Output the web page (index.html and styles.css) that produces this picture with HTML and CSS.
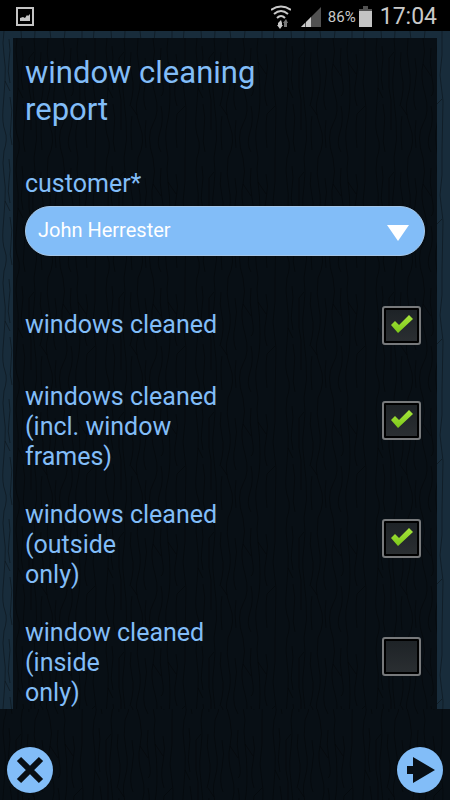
FILE: index.html
```html
<!DOCTYPE html>
<html lang="en">
<head>
  <meta charset="UTF-8">
  <meta name="viewport" content="width=device-width, initial-scale=1.0">
  <title>window cleaning report</title>
  <link rel="stylesheet" href="styles.css">
</head>
<body>

  <header class="status-bar">
    <svg class="icon-picture" width="18" height="19" viewBox="0 0 18 19">
      <path fill="#c4c4c4" fill-rule="evenodd" d="M0 0h18v19H0zM2 2v15h14V2z"/>
      <path fill="#c4c4c4" d="M4 14v-3l3-1 2 1 2-3 1 1 2-2v7z"/>
    </svg>
    <div class="status-right">
      <svg width="20" height="24" viewBox="0 0 20 24">
        <g fill="none" stroke="#c9c9c9" stroke-width="2">
          <path d="M0 5q10-7 20 0"/>
          <path d="M3 9q7-6 14 0"/>
          <path d="M6 13q4-4 8 0"/>
        </g>
        <path fill="#c9c9c9" d="M7 18l3-3 1 3v2h1l-3 4-3-4h1z"/>
        <path fill="#777" d="M13 22h3v-4h1l-2-4-3 4h1z"/>
      </svg>
      <svg class="icon-signal" width="20" height="20" viewBox="0 0 20 20">
        <path fill="#515151" d="M20 0v20H0z"/>
        <path fill="#c9c9c9" d="M0 20l4-4v4zM5 20v-5l5-5v10z"/>
      </svg>
      <span class="percent">86%</span>
      <svg class="icon-battery" width="13" height="21" viewBox="0 0 13 21">
        <path fill="#515151" d="M4 0h5v3h4v2H0V3h4z"/>
        <path fill="#c4c4c4" d="M0 5h13v16H0z"/>
      </svg>
      <span class="clock">17:04</span>
    </div>
  </header>

  <main class="content">
    <form class="panel" id="report">
      <h1>window cleaning<br>report</h1>

      <label class="field-label" for="customer">customer*</label>
      <div class="select-box">
        <select id="customer" name="customer">
          <option>John Herrester</option>
        </select>
        <svg class="select-arrow" width="22" height="16" viewBox="0 0 22 16">
          <path fill="#fff" d="M0 0h22L11 16z"/>
        </svg>
      </div>

      <div class="checks">
        <div class="check-row">
          <label for="cleaned">windows cleaned</label>
          <input type="checkbox" id="cleaned" checked>
        </div>
        <div class="check-row tall">
          <label for="frames">windows cleaned<br>(incl. window<br>frames)</label>
          <input type="checkbox" id="frames" checked>
        </div>
        <div class="check-row tall">
          <label for="outside">windows cleaned<br>(outside<br>only)</label>
          <input type="checkbox" id="outside" checked>
        </div>
        <div class="check-row tall">
          <label for="inside">window cleaned<br>(inside<br>only)</label>
          <input type="checkbox" id="inside">
        </div>
      </div>
    </form>
  </main>

  <footer class="actions">
    <button type="button" class="round" aria-label="Cancel">
      <svg width="46" height="46" viewBox="0 0 46 46">
        <path stroke="#080f15" stroke-width="6" d="M12 12l22 22M34 12L12 34"/>
      </svg>
    </button>
    <button type="submit" form="report" class="round" aria-label="Next">
      <svg width="46" height="46" viewBox="0 0 46 46">
        <path fill="#080f15" d="M10 19h6v-9l22 13-22 13v-9h-6z"/>
      </svg>
    </button>
  </footer>

</body>
</html>
```

FILE: styles.css
```css
* { box-sizing: border-box; margin: 0; padding: 0; }
:root {
  --blue: #82bdf8;
  --grain: url("data:image/svg+xml,%3Csvg xmlns='http://www.w3.org/2000/svg' width='90' height='120'%3E%3Cg fill='none' stroke='%23000' stroke-opacity='.35'%3E%3Cpath d='M4 0q-2 12 0 24t1 26-2 28 2 22-1 20M9 8q2 12 0 22t1 22M10 66q3 14 1 26t1 22M16 20v30l2 12v30M21 0q2 14 0 28t-1 24 3 30-2 38M28 14q-2 12 1 24t-2 30M29 78q-2 12 0 34M35 0q-2 16 1 30t-1 28 2 30-2 32M42 20q3 14 0 28t1 24M43 82q-2 12 0 28M50 0q3 14 0 26t2 30-2 30 0 34M58 10q-2 14 1 30t-1 18M58 68q3 14-1 26t1 20M65 0q-2 10 0 24t2 32-3 30 1 34M73 16q3 12 0 26t1 26M74 76q-2 14 0 34M82 0v24l-2 20 3 26-1 50M16 20l5-6M28 68l6 9M50 26l8 12M5 50l5 10M65 24l8 12M74 76l8-8'/%3E%3C/g%3E%3C/svg%3E");
}
body {
  font-family: Roboto, sans-serif;
  height: 100vh;
  display: flex;
  flex-direction: column;
  background: #080f15 var(--grain);
  color: var(--blue);
}
svg { display: block; }
.status-bar {
  height: 31px;
  flex: none;
  display: flex;
  justify-content: space-between;
  align-items: center;
  padding: 2px 13px 0 16px;
  background: #000;
  color: #c9c9c9;
}
.status-right {
  display: flex;
  align-items: center;
}
.icon-signal { margin: 0 7px 0 10px; }
.percent { font-size: 15px; }
.icon-battery { margin: 0 8px 0 3px; }
.clock { font-size: 23px; line-height: 28px; }
.content {
  flex: 1;
  min-height: 0;
  overflow: hidden;
  padding: 7px 13px 0;
  background: #182c3b var(--grain);
}
.panel {
  min-height: 100%;
  padding: 16px 12px 0;
  background: #080f15 var(--grain);
}
h1 {
  font-size: 31px;
  font-weight: normal;
  line-height: 37px;
  margin-bottom: 41px;
}
.field-label {
  display: block;
  font-size: 25px;
  line-height: 30px;
  margin-bottom: 7px;
}
.select-box { position: relative; }
.select-box select {
  appearance: none;
  display: block;
  width: 100%;
  height: 50px;
  padding: 0 50px 3px 12px;
  border: 1px solid #a4c6e8;
  border-radius: 25px;
  background: var(--blue);
  color: #fff;
  font-family: inherit;
  font-size: 20px;
}
.select-arrow {
  position: absolute;
  right: 16px;
  top: 19px;
  pointer-events: none;
}
.checks {
  display: flex;
  flex-direction: column;
  gap: 28px;
  margin-top: 40px;
}
.check-row {
  display: flex;
  justify-content: space-between;
  align-items: center;
  min-height: 58px;
  padding-right: 4px;
  font-size: 25px;
  line-height: 30px;
}
.check-row input {
  appearance: none;
  flex: none;
  width: 39px;
  height: 39px;
  border: 2px solid #77797b;
  border-radius: 3px;
  box-shadow: inset 0 0 0 2px #000;
  background: linear-gradient(#1d2226, #2b2f32);
}
.check-row.tall input { margin-bottom: 14px; }
.check-row input:checked {
  background: url("data:image/svg+xml,%3Csvg xmlns='http://www.w3.org/2000/svg' width='22' height='18'%3E%3ClinearGradient id='g' x2='0' y2='1'%3E%3Cstop stop-color='%23a8e63c'/%3E%3Cstop offset='1' stop-color='%237cc81a'/%3E%3C/linearGradient%3E%3Cpath fill='url(%23g)' d='M0 10l4-4 4 4L18 0l4 4L7 18z'/%3E%3C/svg%3E") 7px 7px no-repeat, linear-gradient(#1d2226, #2b2f32);
}
.actions {
  flex: none;
  display: flex;
  justify-content: space-between;
  padding: 38px 7px 7px;
}
.round {
  width: 46px;
  height: 46px;
  border: none;
  border-radius: 50%;
  background: var(--blue);
  cursor: pointer;
}
```
